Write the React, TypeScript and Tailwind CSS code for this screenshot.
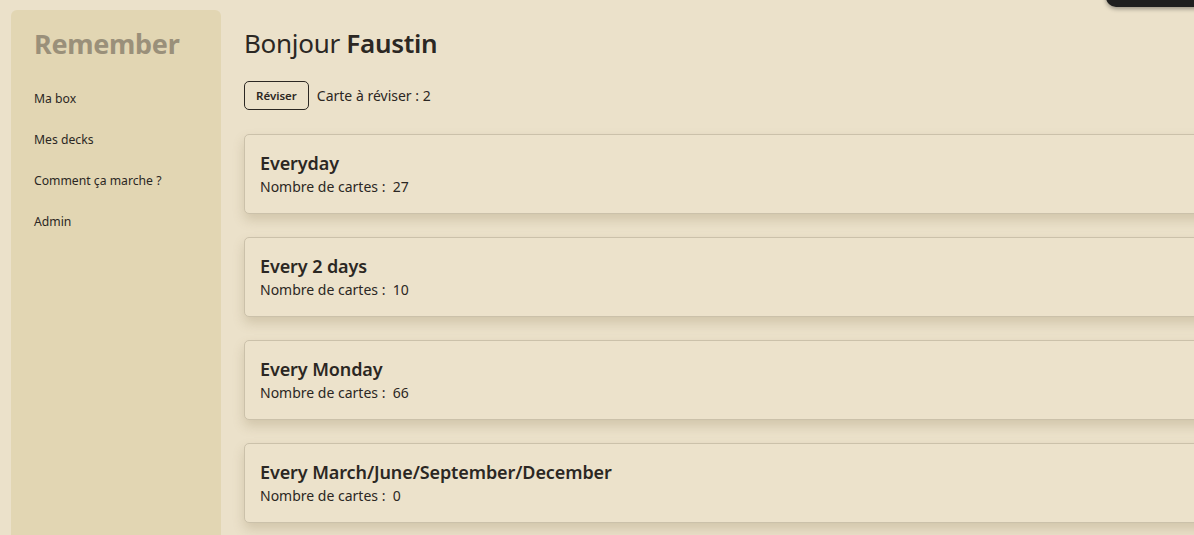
import React from "react"

const navItems = ["Ma box", "Mes decks", "Comment ça marche ?", "Admin"]

const decks = [
  { title: "Everyday", count: 27 },
  { title: "Every 2 days", count: 10 },
  { title: "Every Monday", count: 66 },
  { title: "Every March/June/September/December", count: 0 },
]

export default function App() {
  return (
    <div
      className="relative w-[1194px] h-[535px] overflow-hidden bg-[#ebe1ca] text-[#2b2723] flex"
      style={{ fontFamily: '"Noto Sans", "Open Sans", sans-serif' }}
    >
      {/* top-right dark pill */}
      <div className="absolute -top-6 left-[1106px] w-[140px] h-[31px] rounded-[10px] bg-[#1f1f1f] shadow-[0_2px_4px_rgba(0,0,0,0.35)]" />

      {/* Sidebar */}
      <aside className="mt-[10px] ml-[11px] w-[210px] shrink-0 h-[600px] rounded-t-md bg-[#e2d6b3] px-[23px] pt-[14px]">
        <h1 className="text-[27px] leading-[40px] font-bold text-[#9a907a] tracking-[-0.3px]">Remember</h1>
        <nav className="mt-[26px] flex flex-col gap-[23px]">
          {navItems.map((item) => (
            <a key={item} className="text-[12.2px] leading-[18px] text-[#2b2723]">
              {item}
            </a>
          ))}
        </nav>
      </aside>

      {/* Main */}
      <main className="ml-[23px] w-[1000px] shrink-0 pt-[24px]">
        <h2 className="text-[26px] leading-[38px] font-normal tracking-[-0.3px]">
          Bonjour <span className="font-semibold">Faustin</span>
        </h2>
        <div className="mt-[19px] flex items-center gap-[8px]">
          <button className="h-[29px] px-[11px] rounded-[5px] border border-[#2b2723] text-[11.5px] font-semibold">
            Réviser
          </button>
          <span className="text-[14px]">Carte à réviser : 2</span>
        </div>
        <div className="mt-[24px] flex flex-col gap-[23px]">
          {decks.map((d) => (
            <div
              key={d.title}
              className="h-[80px] rounded-[5px] border border-[#cbc1aa] bg-[#ece2cb] px-[15px] pt-[14px] shadow-[0_6px_12px_rgba(120,100,60,0.22)]"
            >
              <div className="text-[18px] leading-[28px] font-semibold tracking-[-0.1px]">{d.title}</div>
              <div className="text-[14px] leading-[20px]">
                Nombre de cartes :&nbsp; {d.count}
              </div>
            </div>
          ))}
        </div>
      </main>
    </div>
  )
}
